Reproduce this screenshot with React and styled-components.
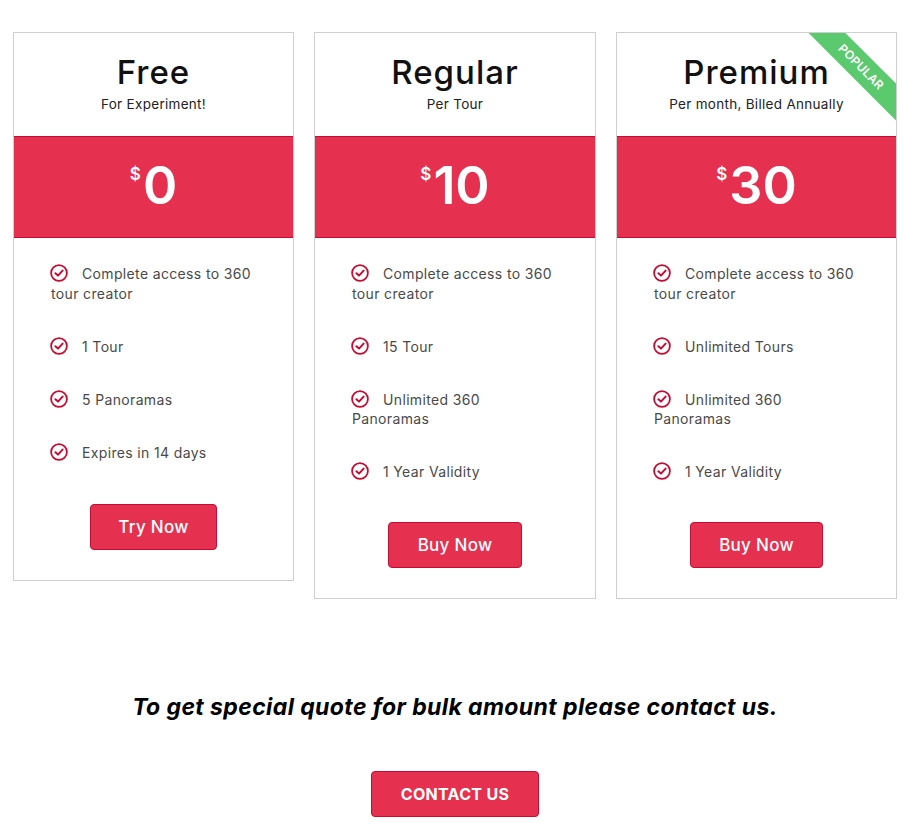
import React from "react";
import styled, { createGlobalStyle } from "styled-components";

const Global = createGlobalStyle`
  html, body { margin: 0; padding: 0; background: #fff; }
  body { font-family: "Inter", "Liberation Sans", sans-serif; }
`;

const Page = styled.div`
  width: 921px;
  height: 834px;
  overflow: hidden;
  padding: 32px 24px 0 13px;
  box-sizing: border-box;
`;
const Grid = styled.div`
  display: grid;
  grid-template-columns: 281px 282px 281px;
  column-gap: 20px;
  align-items: start;
`;
const Card = styled.section`
  position: relative;
  overflow: hidden;
  border: 1px solid #cfcfcf;
  box-sizing: border-box;
  padding-bottom: 30px;
  text-align: center;
`;
const Ribbon = styled.div`
  position: absolute;
  top: 21px;
  right: -35px;
  width: 140px;
  height: 26px;
  line-height: 26px;
  background: #5bca6e;
  color: #fff;
  font-size: 12px;
  font-weight: 600;
  letter-spacing: 0.2px;
  transform: rotate(45deg);
  text-align: center;
`;
const Head = styled.header`
  height: 103px;
  box-sizing: border-box;
  padding-top: 19px;
`;
const Title = styled.h2`
  margin: 0;
  font-size: 33px;
  line-height: 40px;
  font-weight: 500;
  color: #111;
  letter-spacing: 1px;
`;
const Sub = styled.p`
  margin: 2px 0 0;
  font-size: 13.5px;
  line-height: 20px;
  letter-spacing: 0.3px;
  color: #222;
`;
const Band = styled.div`
  height: 102px;
  box-sizing: border-box;
  background: #e5304f;
  border-top: 1px solid #c40c35;
  border-bottom: 1px solid #c40c35;
  display: flex;
  align-items: center;
  justify-content: center;
  color: #fff;
  padding-bottom: 2px;
`;
const Dollar = styled.sup`
  font-size: 17px;
  font-weight: 600;
  line-height: 1;
  align-self: flex-start;
  margin: 29px 2px 0 0;
  vertical-align: baseline;
`;
const Amount = styled.span`
  font-size: 52px;
  line-height: 60px;
  font-weight: 600;
`;
const List = styled.ul`
  display: flow-root;
  list-style: none;
  margin: 0;
  padding: 26px 37px 0 37px;
  text-align: left;
`;
const Item = styled.li`
  font-size: 14px;
  line-height: 19.6px;
  letter-spacing: 0.35px;
  color: #4a4a4a;
  margin-bottom: 33.4px;
`;
const Check = styled.svg`
  width: 18px;
  height: 18px;
  margin: -6px 14px -6px -1px;
  vertical-align: 3px;
`;
const ActionRow = styled.div`
  display: flex;
  justify-content: center;
  margin-top: ${(p) => p.$mt}px;
`;
const Action = styled.a`
  display: flex;
  align-items: center;
  justify-content: center;
  box-sizing: border-box;
  width: ${(p) => p.$w}px;
  height: 46px;
  background: #e5304f;
  border: 1px solid #c40c35;
  border-radius: 4px;
  color: #fff;
  font-size: ${(p) => (p.$strong ? 16 : 17)}px;
  font-weight: ${(p) => (p.$strong ? 700 : 500)};
  letter-spacing: 0.3px;
`;
const Bottom = styled.div`
  margin-left: -13px;
  margin-right: -24px;
  padding-right: 11px;
  text-align: center;
`;
const Quote = styled.p`
  margin: 93px 0 0;
  font-size: 23px;
  line-height: 30px;
  letter-spacing: 0.4px;
  font-weight: 700;
  font-style: italic;
  color: #000;
`;

const CheckIcon = () => (
  <Check viewBox="0 0 18 18" fill="none" stroke="#c40c35" aria-hidden="true">
    <circle cx="9" cy="9" r="7.9" strokeWidth="1.8" />
    <path d="M5.4 9.2 8 11.6 12.6 6.6" strokeWidth="2" strokeLinecap="round" strokeLinejoin="round" />
  </Check>
);

const plans = [
  {
    name: "Free",
    sub: "For Experiment!",
    price: "0",
    cta: "Try Now",
    w: 127,
    mt: 8.4,
    items: ["Complete access to 360 tour creator", "1 Tour", "5 Panoramas", "Expires in 14 days"],
  },
  {
    name: "Regular",
    sub: "Per Tour",
    price: "10",
    cta: "Buy Now",
    w: 134,
    mt: 6.8,
    items: ["Complete access to 360 tour creator", "15 Tour", "Unlimited 360 Panoramas", "1 Year Validity"],
  },
  {
    name: "Premium",
    sub: "Per month, Billed Annually",
    price: "30",
    cta: "Buy Now",
    w: 133,
    mt: 6.8,
    popular: true,
    items: ["Complete access to 360 tour creator", "Unlimited Tours", "Unlimited 360 Panoramas", "1 Year Validity"],
  },
];

export default function App() {
  return (
    <Page>
      <Global />
      <Grid>
        {plans.map((p) => (
          <Card key={p.name}>
            {p.popular && <Ribbon>POPULAR</Ribbon>}
            <Head>
              <Title>{p.name}</Title>
              <Sub>{p.sub}</Sub>
            </Head>
            <Band>
              <Dollar>$</Dollar>
              <Amount>{p.price}</Amount>
            </Band>
            <List>
              {p.items.map((t) => (
                <Item key={t}>
                  <CheckIcon />
                  {t}
                </Item>
              ))}
            </List>
            <ActionRow $mt={p.mt}>
              <Action $w={p.w}>{p.cta}</Action>
            </ActionRow>
          </Card>
        ))}
      </Grid>
      <Bottom>
        <Quote>To get special quote for bulk amount please contact us.</Quote>
        <ActionRow $mt={49}>
          <Action $w={168} $strong>CONTACT US</Action>
        </ActionRow>
      </Bottom>
    </Page>
  );
}
